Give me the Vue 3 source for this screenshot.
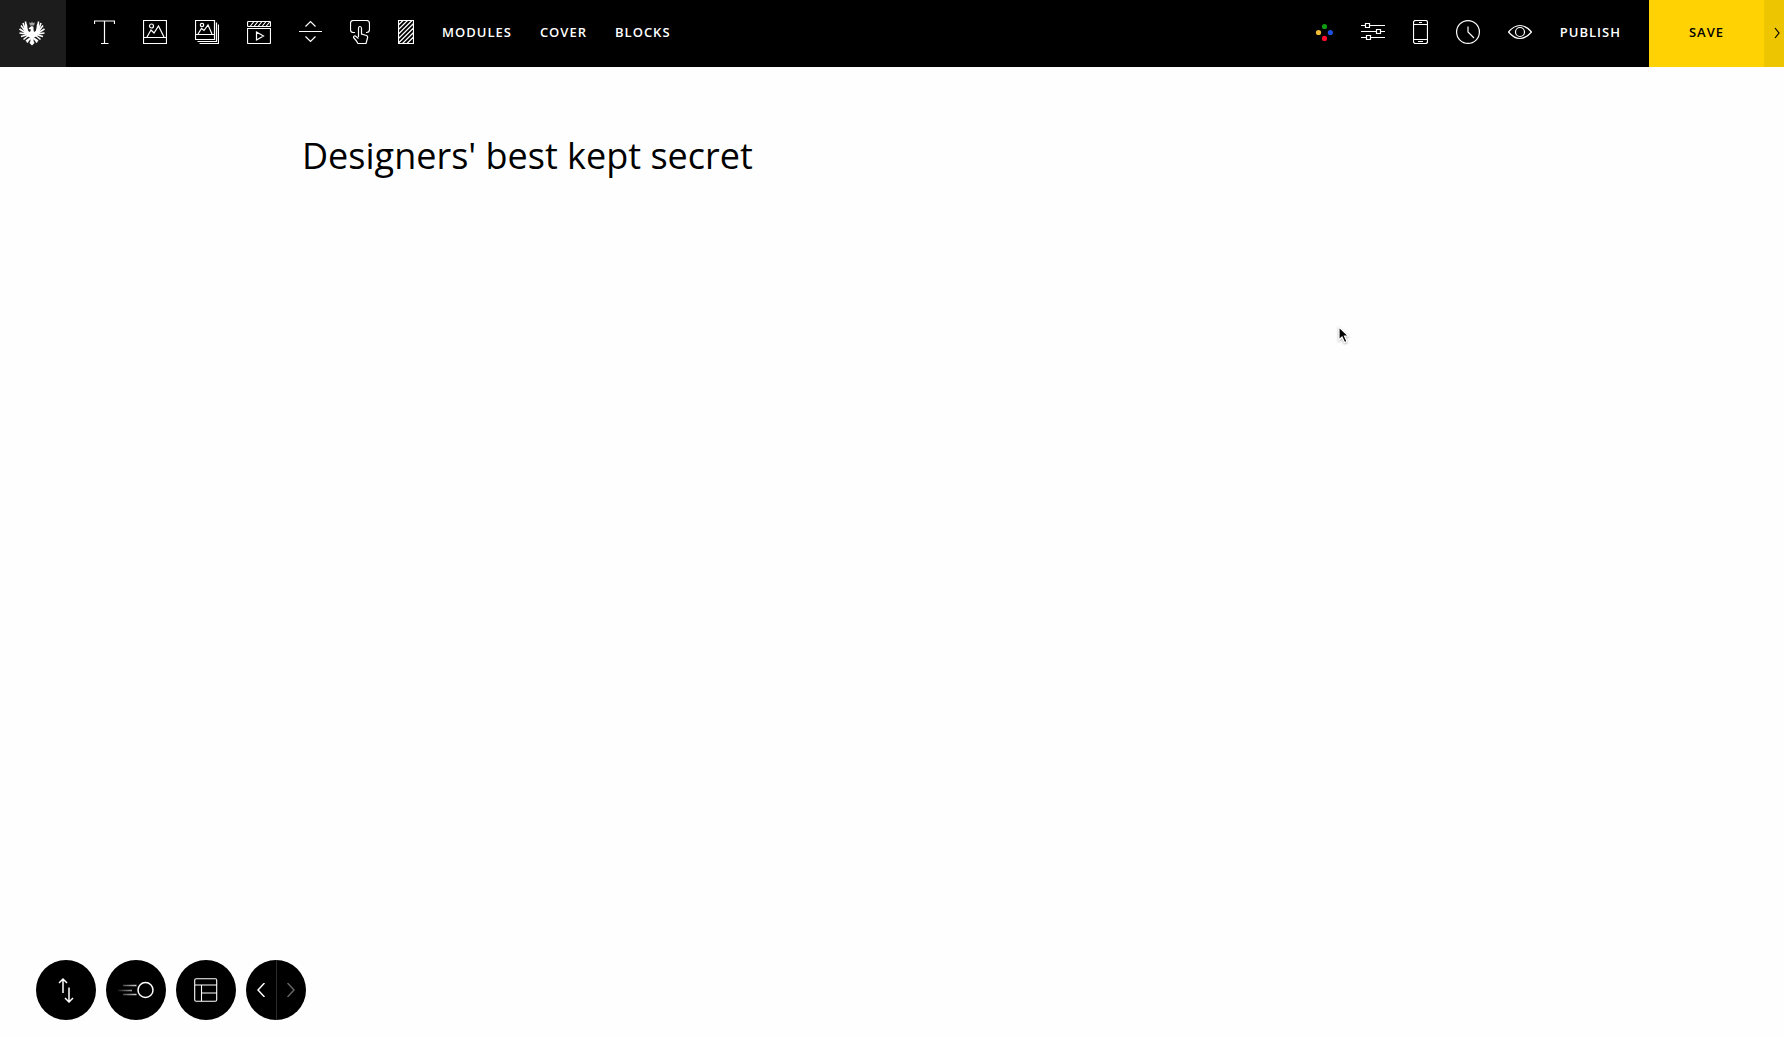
<script setup>
const feathers = [
  'M6.500 .5L7 7',
  'M4 2L6.500 9',
  'M2 4.500L7 11',
  'M.5 8L7 12',
  'M.5 12L8 13',
  'M2 15.500L9 13.500',
  'M4.500 18.500L10 14',
  'M8 21.500L11 17',
  'M7 20L11 17.500',
]
</script>

<template>
  <div class="page">
    <header class="bar">
      <a class="logo" href="#" aria-label="Home">
        <svg width="26" height="25" viewBox="0 0 26 25">
          <path v-for="(d, i) in feathers" :key="'l' + i" :d="d" />
          <path v-for="(d, i) in feathers" :key="'r' + i" :d="d" transform="translate(26 0) scale(-1 1)" />
          <path class="body" d="M7 2Q9 4 8.500 7Q8.500 10 11 11L12 8.500L9.500 8L11 6L13 5L14.500 6L14.500 8.500L15 11Q17.500 10 17.500 7Q17 4 19 2L20.500 6L20.500 12L17 15.500L15 16.500L14.500 20L15.500 22L13 24.500L10.500 22L11.500 20L11 16.500L9 15.500L5.500 12L5.500 6Z" />
          <path class="body crown" d="M11 4.500L10 1.500L12 2L13 .5L14 2L16 1.500L15 4.500Z" />
        </svg>
      </a>

      <nav class="tools" aria-label="Insert">
        <button class="tool" type="button" aria-label="Text">
          <svg width="21" height="24" viewBox="0 0 21 24"><path d="M.5 4V1h20v3M10.500 1v22.500M7 23.500h7.500" /></svg>
        </button>
        <button class="tool" type="button" aria-label="Image">
          <svg width="24" height="24" viewBox="0 0 24 24"><path d="M.5.5h23v23H.5zM.5 17.500h23M4 17l4-7 3 3 4.500-7 5.500 11" /><circle cx="8.500" cy="6" r="2" /></svg>
        </button>
        <button class="tool" type="button" aria-label="Gallery">
          <svg width="24" height="24" viewBox="0 0 24 24"><path d="M.5.500h19v19H.5zM.5 14.500h19M3 14l3.500-5.500 2.500 2 4-5.500 4 9M21.500 2.500v19h-19M23.500 4.500v19h-19" /><circle cx="7" cy="5" r="1.700" /></svg>
        </button>
        <button class="tool" type="button" aria-label="Video">
          <svg width="24" height="24" viewBox="0 0 24 24"><rect x=".5" y="1.500" width="23" height="5" rx="1" /><path d="M3 6.500l4-5M7 6.500l4-5M11 6.500l4-5M15 6.500l4-5M19 6.500l4-5M.5 8.500h23v14q0 1-1 1h-21q-1 0-1-1zM9.500 12v8l7-4z" /></svg>
        </button>
        <button class="tool" type="button" aria-label="Spacer">
          <svg width="23" height="24" viewBox="0 0 23 24"><path d="M0 11.500h23M6.500 6.500l5-5 5 5M6.500 16.500l5 5 5-5" /></svg>
        </button>
        <button class="tool" type="button" aria-label="Button">
          <svg width="20" height="24" viewBox="0 0 20 24"><path d="M5 12.500H3.500q-3 0-3-3v-6q0-3 3-3h13q3 0 3 3v6q0 3-3 3H16M8.500 17V8.500q0-2 1.500-2t1.500 2V14l5 1.500q1.500.500 1 2.500l-1.500 5.500H8q-1.500-3-4.500-6 0-2 2-1.500l3 2.500" /></svg>
        </button>
        <button class="tool" type="button" aria-label="Pattern">
          <svg width="16" height="24" viewBox="0 0 16 24"><path d="M.5.500h15v23H.5zM.5 5l4.500-4.500M.5 9.500l9-9M.5 14l13.500-13.500M.5 18.500l15-15M.5 23l15-15M4.500 23.500l11-11M9 23.500l6.500-6.500" /></svg>
        </button>
        <button class="tool word" type="button">MODULES</button>
        <button class="tool word" type="button">COVER</button>
        <button class="tool word" type="button">BLOCKS</button>
      </nav>

      <nav class="tools end" aria-label="Page">
        <button class="tool" type="button" aria-label="Styles">
          <svg class="dots" width="18" height="18" viewBox="0 0 18 18"><circle cx="9.500" cy="3.500" r="2.600" fill="#109b10" /><circle cx="3.500" cy="9.500" r="2.600" fill="#efbd35" /><circle cx="15.400" cy="9.500" r="2.600" fill="#1c4fe0" /><circle cx="9.500" cy="15.400" r="2.600" fill="#fb0c2c" /></svg>
        </button>
        <button class="tool" type="button" aria-label="Settings">
          <svg width="24" height="24" viewBox="0 0 24 24"><path d="M0 5.500h4.500M8.500 5.500H24M0 11.500h15.500M19.500 11.500H24M0 17.500h5.500M9.500 17.500H24M4.500 3.500h4v4h-4zM15.500 9.500h4v4h-4zM5.500 15.500h4v4h-4z" /></svg>
        </button>
        <button class="tool" type="button" aria-label="Mobile">
          <svg width="15" height="24" viewBox="0 0 15 24"><rect x=".5" y=".5" width="14" height="23" rx="2" /><path d="M.5 4.500h14M.5 19.500h14M6 2.500h3M5 21.500h5" /></svg>
        </button>
        <button class="tool" type="button" aria-label="History">
          <svg width="24" height="24" viewBox="0 0 24 24"><circle cx="12" cy="12" r="11.400" /><path d="M12 6.500V12l6 6" /></svg>
        </button>
        <button class="tool" type="button" aria-label="Preview">
          <svg width="24" height="24" viewBox="0 0 24 24"><path d="M.5 12Q6 5.500 12 5.500T23.500 12Q18 18.500 12 18.500T.5 12z" /><circle cx="12" cy="12" r="4.500" /></svg>
        </button>
        <button class="tool word" type="button">PUBLISH</button>
      </nav>

      <button class="save" type="button">SAVE</button>
      <button class="more" type="button" aria-label="More save options">
        <svg width="6" height="12" viewBox="0 0 6 12"><path d="M1 1l4 5-4 5" /></svg>
      </button>
    </header>

    <main class="content">
      <h1>Designers' best kept secret</h1>
    </main>

    <footer class="dock">
      <button class="round" type="button" aria-label="Reorder">
        <svg width="18" height="26" viewBox="0 0 18 26"><path d="M6 16V2M2 6l4-4 4 4M12 10.500V25M8 21l4 4 4-4" /></svg>
      </button>
      <button class="round" type="button" aria-label="Animations">
        <svg width="36" height="18" viewBox="0 0 36 18">
          <defs>
            <linearGradient id="trail" gradientUnits="userSpaceOnUse" x1="0" x2="18"><stop offset="0" stop-color="#fff" stop-opacity=".1" /><stop offset="1" stop-color="#fff" stop-opacity=".8" /></linearGradient>
          </defs>
          <path d="M5 4.500h13.500M0 9.500h14M5 13.500h13.500" stroke="url(#trail)" />
          <circle cx="27.500" cy="9" r="7.500" />
        </svg>
      </button>
      <button class="round" type="button" aria-label="Layout">
        <svg class="grid" width="24" height="24" viewBox="0 0 24 24"><rect x=".7" y=".7" width="22" height="22.500" rx="1.500" /><path d="M1 7h22M7.500 7v16M7.500 15H23" /></svg>
      </button>
      <div class="round pair">
        <button class="half" type="button" aria-label="Undo">
          <svg width="8" height="14" viewBox="0 0 8 14"><path d="M7.500 0L1 7l6.500 7" /></svg>
        </button>
        <button class="half" type="button" aria-label="Redo" disabled>
          <svg width="8" height="14" viewBox="0 0 8 14"><path d="M.5 0L7 7 .5 14" /></svg>
        </button>
      </div>
    </footer>

    <svg class="pointer" width="14" height="20" viewBox="0 0 14 20" aria-hidden="true">
      <path d="M1 1v13l3-3 2.500 5.500 2.500-1L6.500 10H10.500z" />
    </svg>
  </div>
</template>

<style>
body {
  margin: 0;
  background: #fefefe;
}
</style>

<style scoped>
.page {
  display: flex;
  flex-direction: column;
  min-height: 100vh;
  font-family: "Open Sans", "Noto Sans", sans-serif;
  color: #000;
}

button {
  margin: 0;
  padding: 0;
  border: 0;
  background: none;
  font: inherit;
  letter-spacing: inherit;
  color: inherit;
  cursor: pointer;
}

svg {
  display: block;
  fill: none;
  stroke: #fff;
  stroke-width: 1.2;
}

.bar {
  display: flex;
  height: 67px;
  background: #000;
  color: #fff;
  font-size: 13px;
  font-weight: 600;
  letter-spacing: 1px;
}

.logo {
  display: flex;
  align-items: center;
  justify-content: center;
  width: 66px;
  padding-right: 2px;
  box-sizing: border-box;
  background: #1c1c1c;
}

.logo svg {
  stroke-width: 1.6;
}

.logo .body {
  fill: #fff;
  stroke: none;
}

.logo .crown {
  opacity: 0.6;
}

.tools {
  display: flex;
  align-items: center;
  gap: 28px;
  padding: 0 28px 3px;
}

.end {
  margin-left: auto;
}

.tool {
  display: flex;
  align-items: center;
}

.dots {
  stroke: none;
}

.word {
  line-height: 24px;
}

.save {
  width: 115px;
  padding-bottom: 3px;
  background: #ffd204;
  color: #000;
}

.more {
  display: flex;
  align-items: center;
  justify-content: center;
  width: 20px;
  padding: 0 0 2px 5px;
  background: #edc500;
}

.more svg {
  stroke: #000;
}

.content {
  width: 100%;
  max-width: 1180px;
  margin: 0 auto;
  padding-top: 64px;
}

h1 {
  margin: 0;
  font-size: 36px;
  font-weight: 400;
  line-height: 50px;
}

.dock {
  display: flex;
  gap: 10px;
  margin-top: auto;
  padding: 0 36px 18px;
}

.round {
  display: flex;
  align-items: center;
  justify-content: center;
  width: 60px;
  height: 60px;
  border-radius: 50%;
  background: #000;
}

.round svg {
  stroke-width: 1.5;
}

.round .grid {
  stroke-width: 1.1;
}

.pair {
  overflow: hidden;
}

.half {
  display: flex;
  flex: 1;
  align-items: center;
  justify-content: center;
  height: 60px;
}

.half + .half {
  border-left: 1px solid #2c2c2c;
}

.half:disabled svg {
  opacity: 0.4;
}

.pointer {
  position: absolute;
  left: 1338px;
  top: 326px;
  filter: drop-shadow(0 1px 1px rgba(0, 0, 0, 0.3));
}

.pointer path {
  fill: #000;
  stroke: #fff;
}
</style>
